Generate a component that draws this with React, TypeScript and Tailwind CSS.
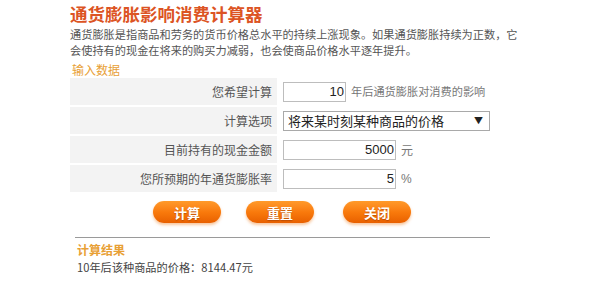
const cjk = { fontFamily: '"Microsoft YaHei", "Noto Sans CJK SC", "Noto Sans", sans-serif' }

function Row({ label, children }: { label: string; children: React.ReactNode }) {
  return (
    <div className="flex items-center h-[27px]">
      <div className="w-[207px] h-full bg-[#f3f3f3] flex items-center justify-end pr-[5px] text-[12px] text-[#555]">
        {label}
      </div>
      <div className="flex items-center pl-[6px] gap-[5px] text-[12px] text-[#777]">{children}</div>
    </div>
  )
}

function Field({ value, w }: { value: string; w: string }) {
  return (
    <input
      readOnly
      value={value}
      className={`${w} h-[20px] border border-[#bdbdbd] bg-white text-right text-[13px] text-[#222] px-[1px] outline-none`}
      style={{ fontFamily: '"Liberation Sans", Arial, sans-serif' }}
    />
  )
}

function Btn({ label, className = '' }: { label: string; className?: string }) {
  return (
    <button
      className={`w-[68px] h-[22px] rounded-full bg-gradient-to-b from-[#ff9a2a] via-[#f97a0c] to-[#e86000] text-white font-bold text-[13px] leading-none shadow-[0_2px_3px_rgba(240,130,40,0.45)] [text-shadow:0_1px_1px_rgba(120,40,0,0.4)] ${className}`}
    >
      {label}
    </button>
  )
}

export default function App() {
  return (
    <div className="w-[600px] h-[297px] bg-white overflow-hidden pl-[70px]" style={cjk}>
      <h1 className="pt-[3px] text-[17.5px] leading-[22px] font-bold text-[#dc5424]">通货膨胀影响消费计算器</h1>
      <p className="mt-[1px] text-[11.2px] leading-[16px] text-[#555]">
        通货膨胀是指商品和劳务的货币价格总水平的持续上涨现象。如果通货膨胀持续为正数，它
        <br />
        会使持有的现金在将来的购买力减弱，也会使商品价格水平逐年提升。
      </p>

      <div className="mt-[5px] pl-[2px] text-[12px] leading-[14px] text-[#e8a035]">输入数据</div>

      <div className="mt-[1px] flex flex-col gap-[2px]">
        <Row label="您希望计算">
          <Field value="10" w="w-[63px]" />
          <span className="text-[11.2px]">年后通货膨胀对消费的影响</span>
        </Row>
        <Row label="计算选项">
          <div className="w-[207px] h-[20px] border border-[#a9a9a9] bg-white flex items-center justify-between pl-[4px] pr-[6px] text-[13px] text-[#222]">
            <span>将来某时刻某种商品的价格</span>
            <span className="text-[9px] text-[#222]">▼</span>
          </div>
        </Row>
        <Row label="目前持有的现金金额">
          <Field value="5000" w="w-[113px]" />
          <span>元</span>
        </Row>
        <Row label="您所预期的年通货膨胀率">
          <Field value="5" w="w-[113px]" />
          <span style={{ fontFamily: '"Liberation Sans", Arial, sans-serif' }}>%</span>
        </Row>
      </div>

      <div className="mt-[9px] pl-[83px] flex">
        <Btn label="计算" />
        <Btn label="重置" className="ml-[25px]" />
        <Btn label="关闭" className="ml-[29px]" />
      </div>

      <div className="mt-[14px] ml-[5px] w-[415px] border-t border-[#9a9a9a]" />
      <div className="mt-[5px] pl-[7px] text-[12px] leading-[14px] font-bold text-[#e8a035]">计算结果</div>
      <div className="mt-[2px] pl-[7px] text-[11.2px] leading-[16px] text-[#444]">10年后该种商品的价格：8144.47元</div>
    </div>
  )
}
